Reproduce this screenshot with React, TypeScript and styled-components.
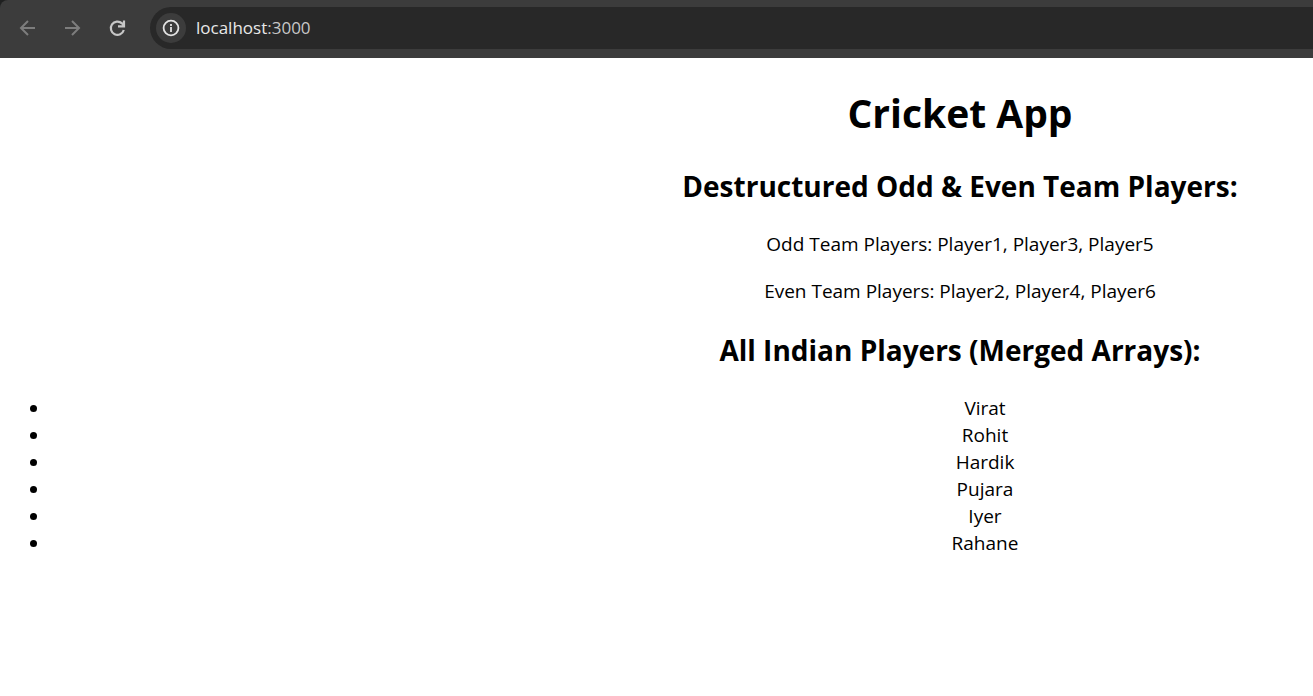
import React from "react";
import styled, { createGlobalStyle } from "styled-components";

const GlobalStyle = createGlobalStyle`
  body {
    margin: 0;
    background: #fff;
    color: #000;
    font-family: "Open Sans", "Noto Sans", sans-serif;
    overflow-x: hidden;
  }
`;

const Frame = styled.div`
  overflow: hidden;
`;

const Toolbar = styled.header`
  display: flex;
  align-items: center;
  height: 58px;
  box-sizing: border-box;
  padding: 0 0 2px 15px;
  border-top-left-radius: 8px;
  background: #3c3c3c;
`;

const TabStrip = styled.div`
  background: #1f2020;
`;

const NavButtons = styled.nav`
  display: flex;
  gap: 20px;
  margin-right: 20px;
`;

const IconButton = styled.button<{ $dim?: boolean }>`
  display: grid;
  place-items: center;
  width: 25px;
  height: 25px;
  padding: 0;
  border: 0;
  background: none;
  color: ${(p) => (p.$dim ? "#7d7d7d" : "#c7c7c7")};
`;

const AddressBar = styled.div`
  display: flex;
  flex: 1;
  align-items: center;
  gap: 10px;
  height: 42px;
  padding-left: 6px;
  border-radius: 21px 0 0 21px;
  background: #282828;
`;

const SiteInfo = styled.button`
  display: grid;
  place-items: center;
  width: 30px;
  height: 30px;
  padding: 0;
  border: 0;
  border-radius: 50%;
  background: #3c3c3c;
  color: #e3e3e3;
`;

const Url = styled.a`
  color: #e8e8e8;
  font-size: 17px;
  line-height: 24px;
  text-decoration: none;
`;

const Port = styled.span`
  color: #c7c7c7;
`;

/* The document is laid out for a full-width desktop and clipped by narrower windows. */
const Page = styled.main`
  min-width: 1920px;
  padding: 28px 0;
  box-sizing: border-box;
  text-align: center;
`;

const Title = styled.h1`
  margin: 0 0 27px;
  font-size: 39px;
  line-height: 53px;
`;

const Heading = styled.h2`
  margin: 25px 0;
  font-size: 28px;
  line-height: 40px;
`;

const Line = styled.p`
  margin: 20px 0;
  font-size: 19px;
  line-height: 27px;
`;

const Players = styled.ul`
  margin: 0;
  padding-left: 50px;
  font-size: 19px;
  line-height: 27px;
`;

const players = ["Virat", "Rohit", "Hardik", "Pujara", "Iyer", "Rahane"];

export default function App() {
  return (
    <Frame>
      <GlobalStyle />
      <TabStrip>
        <Toolbar>
          <NavButtons aria-label="History">
            <IconButton $dim aria-label="Back">
              <svg width="25" height="25" viewBox="0 0 25 25" fill="none" stroke="currentColor" strokeWidth="2">
                <path d="M20 12H6.5M13 5L6 12L13 19" />
              </svg>
            </IconButton>
            <IconButton $dim aria-label="Forward">
              <svg width="25" height="25" viewBox="0 0 25 25" fill="none" stroke="currentColor" strokeWidth="2">
                <path d="M5 12H18.5M12 5L19 12L12 19" />
              </svg>
            </IconButton>
            <IconButton aria-label="Reload">
              <svg width="25" height="25" viewBox="0 0 25 25" fill="none" stroke="currentColor" strokeWidth="2.2">
                <path d="M18.8 14A6.6 6.6 0 1 1 17 7.4L19 9.8M19 4.5V10.4H13" />
              </svg>
            </IconButton>
          </NavButtons>
          <AddressBar>
            <SiteInfo aria-label="Site information">
              <svg width="20" height="20" viewBox="0 0 20 20" fill="none" stroke="currentColor" strokeWidth="1.8">
                <circle cx="10" cy="10" r="7.4" />
                <path d="M10 9V14M10 6V8" />
              </svg>
            </SiteInfo>
            <Url href="#">
              localhost<Port>:3000</Port>
            </Url>
          </AddressBar>
        </Toolbar>
      </TabStrip>
      <Page>
        <Title>Cricket App</Title>
        <Heading>Destructured Odd &amp; Even Team Players:</Heading>
        <Line>Odd Team Players: Player1, Player3, Player5</Line>
        <Line>Even Team Players: Player2, Player4, Player6</Line>
        <Heading>All Indian Players (Merged Arrays):</Heading>
        <Players>
          {players.map((name) => (
            <li key={name}>{name}</li>
          ))}
        </Players>
      </Page>
    </Frame>
  );
}
